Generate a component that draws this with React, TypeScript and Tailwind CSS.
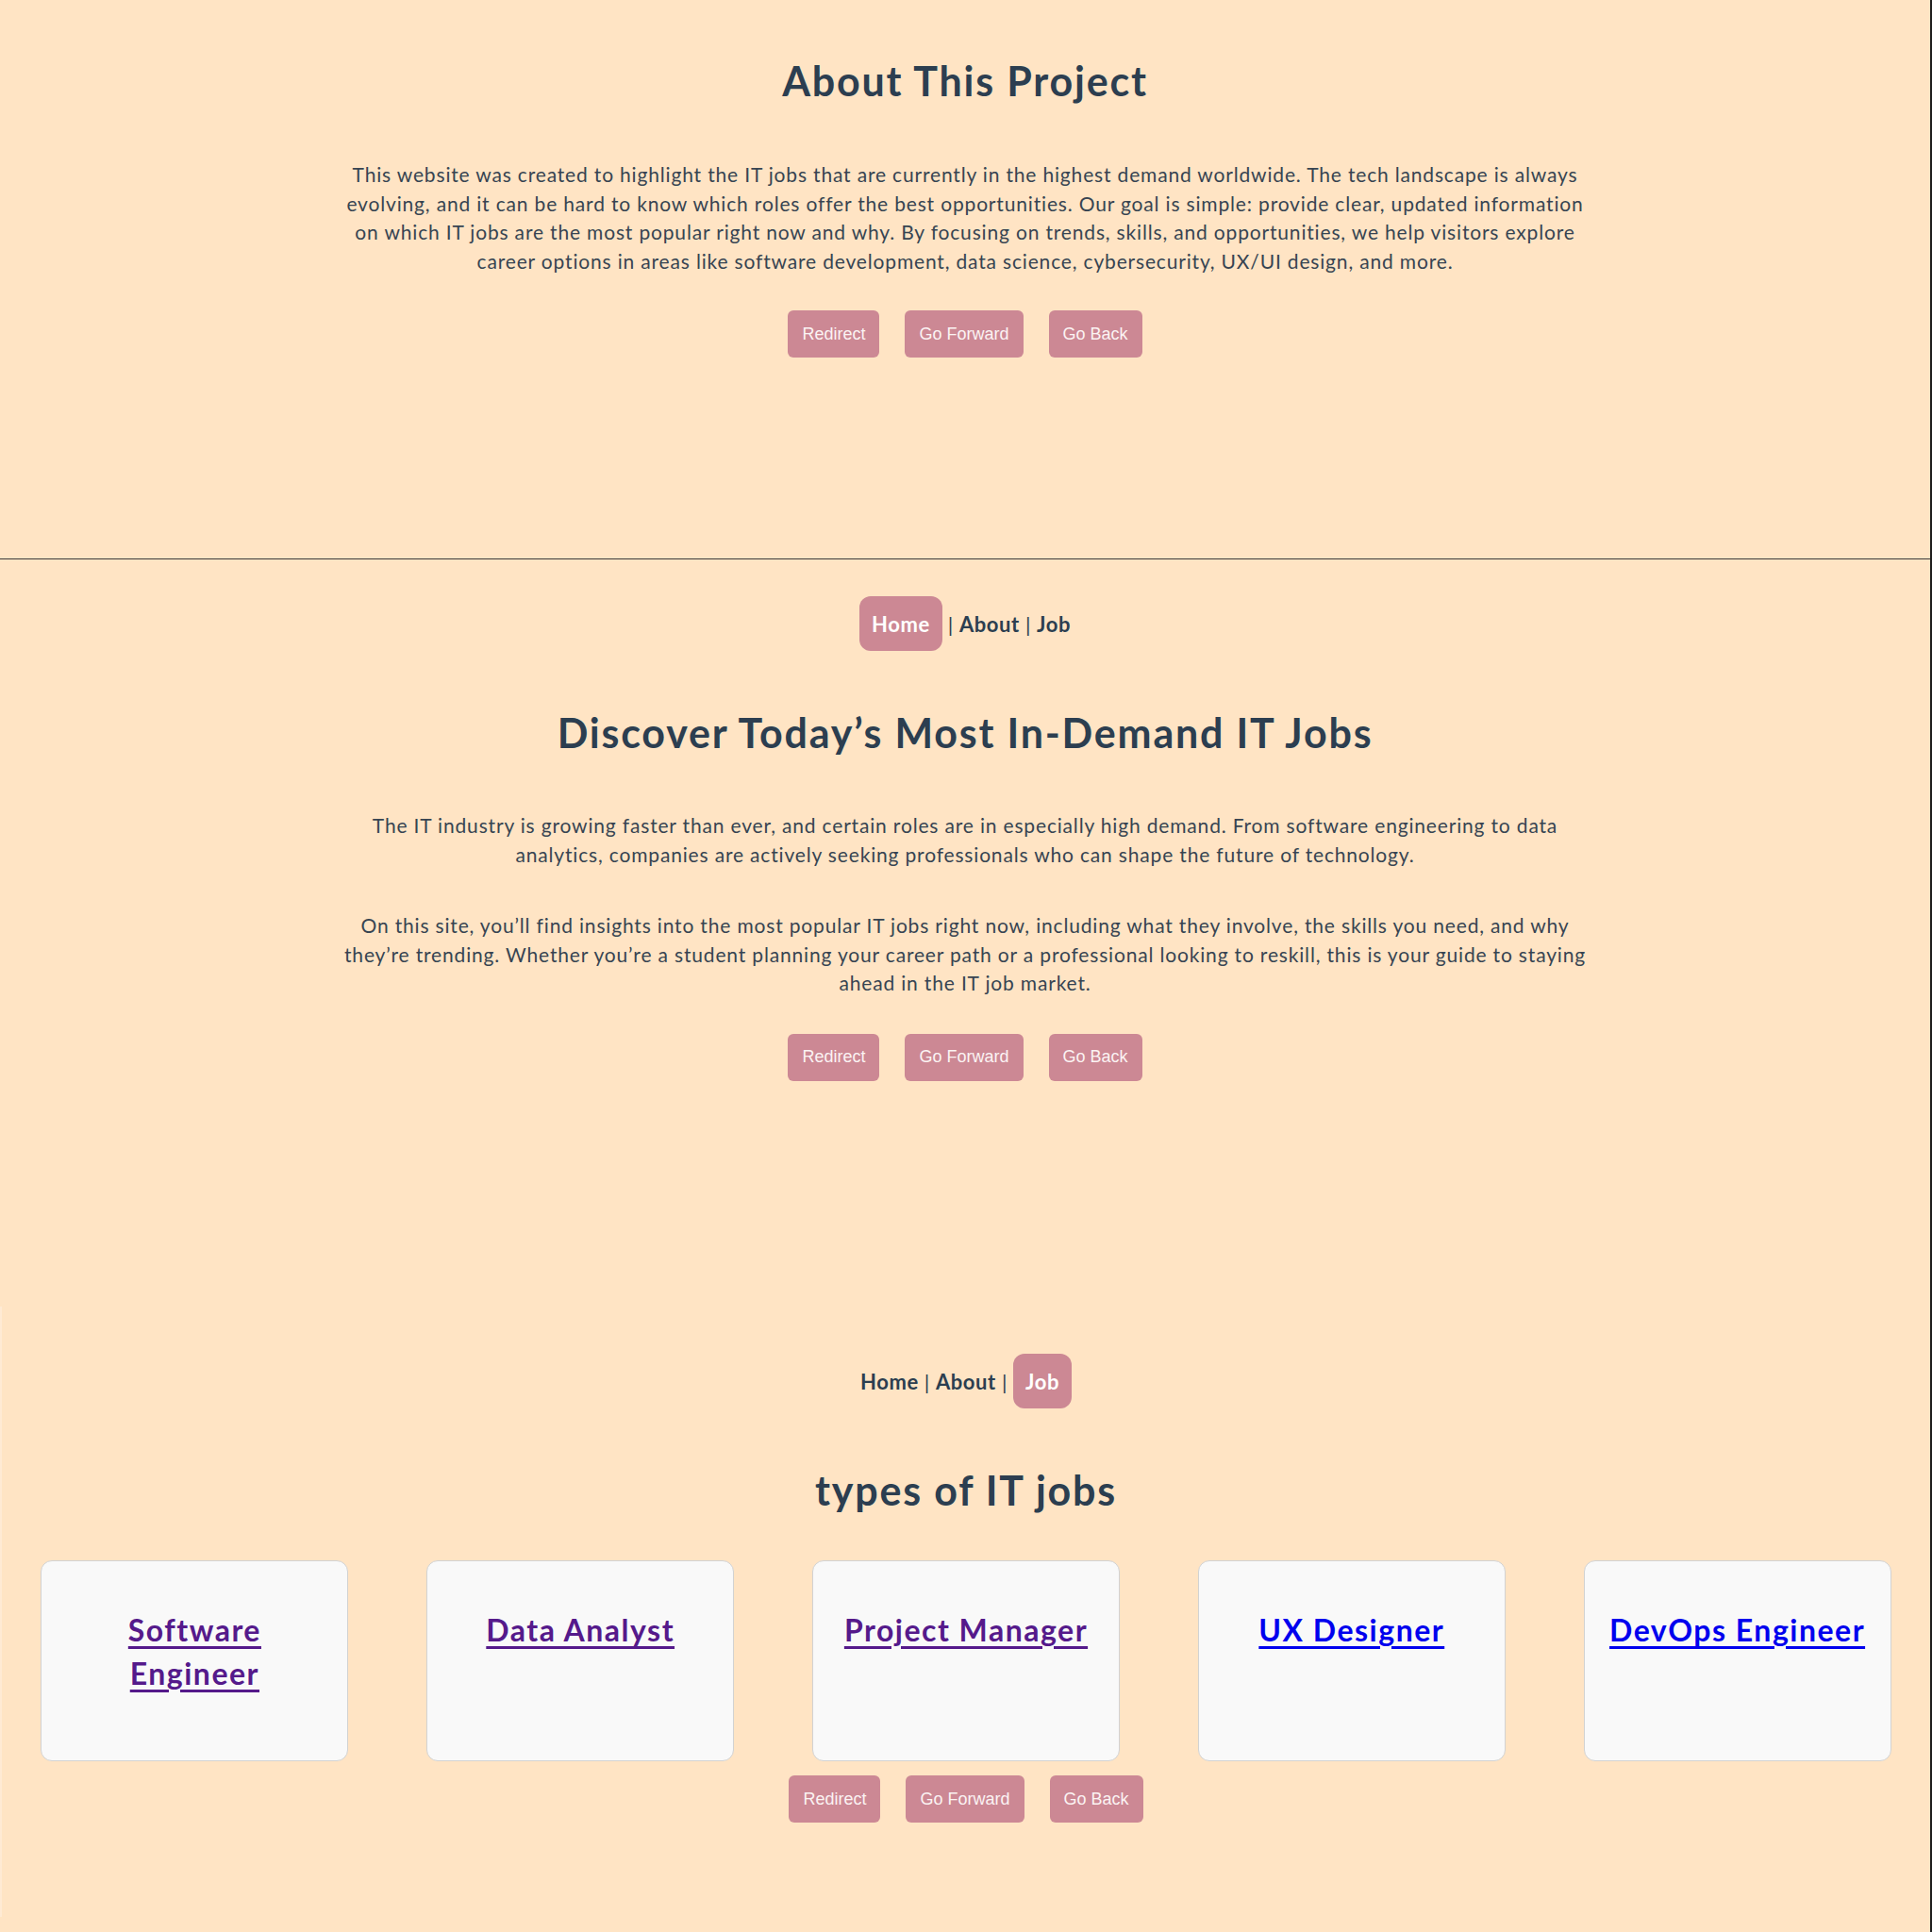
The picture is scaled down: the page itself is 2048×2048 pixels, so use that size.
const buttons = ["Redirect", "Go Forward", "Go Back"];

const jobs = [
  { title: "Software Engineer", visited: true },
  { title: "Data Analyst", visited: true },
  { title: "Project Manager", visited: true },
  { title: "UX Designer", visited: false },
  { title: "DevOps Engineer", visited: false },
];

function NavButtons() {
  return (
    <div className="flex justify-center gap-[27px]">
      {buttons.map((label) => (
        <button
          key={label}
          className="h-[50px] px-[15px] rounded-[6px] bg-[#cc8894] text-[#fbf3f3] text-[18px] font-['Liberation_Sans',Arial,sans-serif]"
        >
          {label}
        </button>
      ))}
    </div>
  );
}

function Nav({ active }: { active: string }) {
  const links = ["Home", "About", "Job"];
  return (
    <nav className="flex items-center justify-center text-[22px] tracking-[0.6px] font-bold">
      {links.map((link, i) => (
        <span key={link} className="flex items-center">
          {i > 0 && <span className="font-normal mx-[6px]">|</span>}
          {link === active ? (
            <a className="bg-[#cc8894] text-white px-[13px] h-[58px] flex items-center rounded-[12px]">
              {link}
            </a>
          ) : (
            <a className="text-[#2c3e50]">{link}</a>
          )}
        </span>
      ))}
    </nav>
  );
}

export default function App() {
  return (
    <div className="min-h-[2048px] bg-[#ffe4c4] border-r-2 border-[#1e1e1e] text-center text-[#2c3e50] font-['Lato','Noto_Sans',sans-serif]">
      <section className="h-[593px] border-b border-[#3a3a3a] pt-[61px]">
        <h1 className="text-[43px] leading-[50px] tracking-[1.8px] font-bold">About This Project</h1>
        <p className="max-w-[1322px] mx-auto mt-[59px] text-[21px] leading-[30.5px] tracking-[0.83px] text-[#374452]">
          This website was created to highlight the IT jobs that are currently in the highest
          demand worldwide. The tech landscape is always evolving, and it can be hard to know
          which roles offer the best opportunities. Our goal is simple: provide clear, updated
          information on which IT jobs are the most popular right now and why. By focusing on
          trends, skills, and opportunities, we help visitors explore career options in areas
          like software development, data science, cybersecurity, UX/UI design, and more.
        </p>
        <div className="mt-[37px]">
          <NavButtons />
        </div>
      </section>

      <section className="h-[792px] pt-[39px]">
        <Nav active="Home" />
        <h2 className="mt-[62px] text-[43px] leading-[50px] tracking-[1.8px] font-bold">
          Discover Today’s Most In-Demand IT Jobs
        </h2>
        <p className="max-w-[1322px] mx-auto mt-[58px] text-[21px] leading-[30.5px] tracking-[0.83px] text-[#374452]">
          The IT industry is growing faster than ever, and certain roles are in especially high
          demand. From software engineering to data analytics, companies are actively seeking
          professionals who can shape the future of technology.
        </p>
        <p className="max-w-[1322px] mx-auto mt-[45px] text-[21px] leading-[30.5px] tracking-[0.83px] text-[#374452]">
          On this site, you’ll find insights into the most popular IT jobs right now, including
          what they involve, the skills you need, and why they’re trending. Whether you’re a
          student planning your career path or a professional looking to reskill, this is your
          guide to staying ahead in the IT job market.
        </p>
        <div className="mt-[38px]">
          <NavButtons />
        </div>
      </section>

      <section className="pt-[50px] border-l-2 border-[#ffead4] pb-[100px]">
        <Nav active="Job" />
        <h2 className="mt-[62px] text-[43px] leading-[50px] tracking-[1.8px] font-bold">types of IT jobs</h2>
        <div className="mt-[49px] flex justify-around">
          {jobs.map((job) => (
            <div
              key={job.title}
              className="w-[326px] h-[213px] bg-[#f9f9f9] border border-[#d2d2d2] rounded-[12px] px-[22px] pt-[50px]"
            >
              <a
                className={
                  "text-[32px] leading-[46px] tracking-[1.5px] font-bold underline underline-offset-[5px] " +
                  (job.visited ? "text-[#551a8b]" : "text-[#0000ee]")
                }
              >
                {job.title}
              </a>
            </div>
          ))}
        </div>
        <div className="mt-[15px]">
          <NavButtons />
        </div>
      </section>
    </div>
  );
}
